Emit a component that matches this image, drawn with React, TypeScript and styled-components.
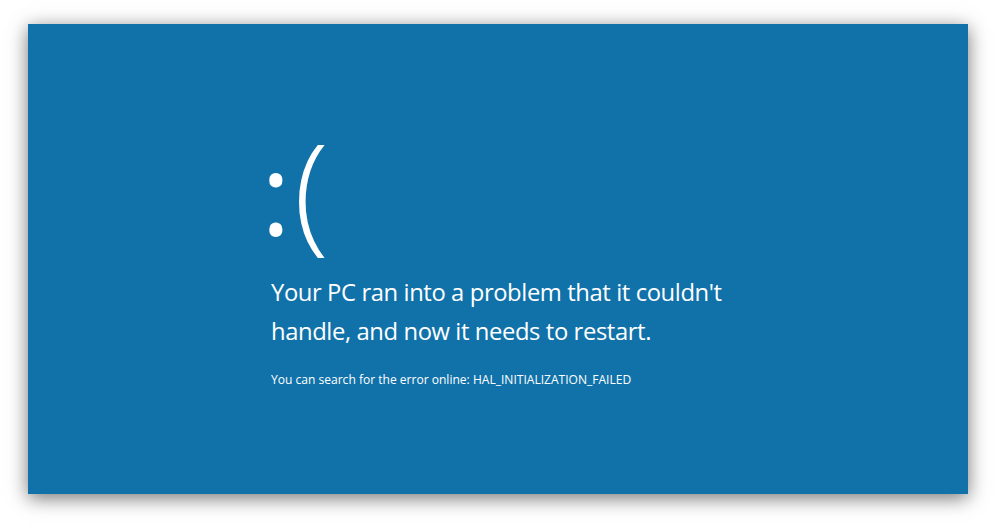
import React from "react";
import styled, { createGlobalStyle } from "styled-components";

const Global = createGlobalStyle`
  html, body { margin: 0; padding: 0; background: #ffffff; }
  #root { width: 996px; height: 526px; }
`;

const Page = styled.div`
  width: 996px;
  height: 526px;
  box-sizing: border-box;
  padding: 24px 28px 32px 28px;
  background: #ffffff;
`;

const Screen = styled.div`
  width: 940px;
  height: 470px;
  box-sizing: border-box;
  background: #1172aa;
  box-shadow: 0 4px 18px rgba(0, 0, 0, 0.55);
  padding: 100px 0 0 243px;
  display: flex;
  flex-direction: column;
  color: #ffffff;
  font-family: "Open Sans", "Noto Sans", sans-serif;
`;

const Face = styled.div`
  height: 130px;
  line-height: 1;
  margin-left: -10px;
  white-space: nowrap;
`;

const Eyes = styled.span`
  font-size: 113px;
  font-weight: 400;
  vertical-align: 3px;
`;

const Mouth = styled.span<{ $size: number }>`
  font-size: ${(p) => p.$size}px;
  font-weight: 300;
  margin-left: 3px;
`;

const Message = styled.p`
  margin: 19px 0 0 0;
  font-size: 23.8px;
  line-height: 39px;
  letter-spacing: -0.4px;
  font-weight: 400;
`;

const Detail = styled.p`
  margin: 21px 0 0 0;
  font-size: 12.05px;
  line-height: 16px;
  letter-spacing: 0;
`;

export default function App() {
  return (
    <>
      <Global />
      <Page>
        <Screen>
          <Face>
            <Eyes>:</Eyes>
            <Mouth $size={129}>(</Mouth>
          </Face>
          <Message>
            Your PC ran into a problem that it couldn't
            <br />
            handle, and now it needs to restart.
          </Message>
          <Detail>You can search for the error online: HAL_INITIALIZATION_FAILED</Detail>
        </Screen>
      </Page>
    </>
  );
}
